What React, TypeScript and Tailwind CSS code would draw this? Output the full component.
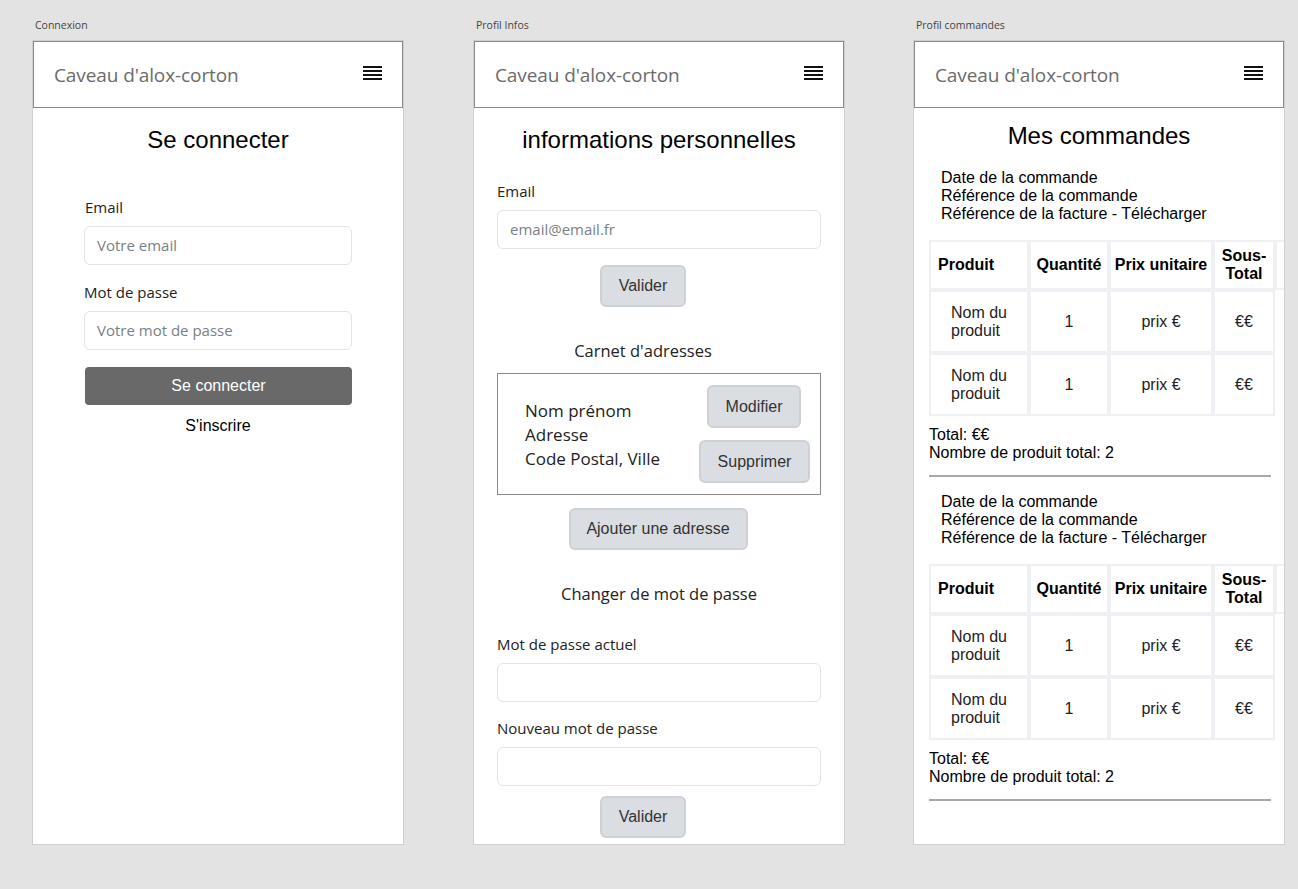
const sans = "font-['Open_Sans','Noto_Sans',sans-serif]";
const arial = "font-['Liberation_Sans',Arial,sans-serif]";

const Hamburger = () => (
  <svg width="19" height="15" viewBox="0 0 19 15" className="block">
    <rect x="0" y="0" width="19" height="2" fill="#111" />
    <rect x="0" y="4" width="19" height="2" fill="#111" />
    <rect x="0" y="8" width="19" height="2" fill="#111" />
    <rect x="0" y="12" width="19" height="2" fill="#111" />
  </svg>
);

const Header = () => (
  <div className="h-[67px] border border-[#8a8a8a] bg-white flex items-center justify-between pl-[20px] pr-[20px]">
    <span className={`${sans} text-[19px] text-[#6b6b6b] tracking-[-0.1px] mt-[2px]`}>
      Caveau d&apos;alox-corton
    </span>
    <div className="-mt-[3px]">
      <Hamburger />
    </div>
  </div>
);

type FrameProps = { label: string; children: React.ReactNode; className?: string };

const Frame = ({ label, children, className = "" }: FrameProps) => (
  <div className={`w-[372px] flex flex-col ${className}`}>
    <div className={`${sans} text-[10.5px] text-[#444] h-[40px] pl-[3px] pt-[20px] leading-none`}>
      {label}
    </div>
    <div className="h-[805px] bg-white border border-[#cfcfcf] overflow-hidden flex flex-col">
      <Header />
      {children}
    </div>
  </div>
);

const Input = ({ placeholder }: { placeholder?: string }) => (
  <div className="h-[39px] rounded-[6px] border border-[#e0e3e7] bg-white flex items-center px-[12px]">
    <span className={`${sans} text-[15px] text-[#7a8088]`}>{placeholder}</span>
  </div>
);

const GreyButton = ({ children, className = "" }: { children: React.ReactNode; className?: string }) => (
  <div
    className={`${arial} h-[42px] rounded-[6px] bg-[#dadee2] border-2 border-[#cdd1d6] text-[16px] text-[#333] flex items-center justify-center ${className}`}
  >
    {children}
  </div>
);

const Connexion = () => (
  <Frame label="Connexion">
    <h1 className={`${arial} text-[24px] text-black text-center mt-[18px] leading-[28px]`}>
      Se connecter
    </h1>
    <div className="px-[51px] flex flex-col mt-[42px]">
      <label className={`${sans} text-[15px] text-[#222] ml-[1px] leading-[22px]`}>Email</label>
      <div className="mt-[8px]">
        <Input placeholder="Votre email" />
      </div>
      <label className={`${sans} text-[15px] text-[#222] mt-[16px] leading-[22px]`}>Mot de passe</label>
      <div className="mt-[8px]">
        <Input placeholder="Votre mot de passe" />
      </div>
      <div
        className={`${arial} mt-[17px] ml-[1px] h-[38px] rounded-[4px] bg-[#696969] text-white text-[16px] flex items-center justify-center`}
      >
        Se connecter
      </div>
      <div className={`${arial} text-[16px] text-black text-center mt-[9px]`}>S&apos;inscrire</div>
    </div>
  </Frame>
);

const ProfilInfos = () => (
  <Frame label="Profil Infos">
    <h1 className={`${arial} text-[24px] text-black text-center mt-[18px] leading-[28px]`}>
      informations personnelles
    </h1>
    <div className="px-[23px] flex flex-col mt-[26px]">
      <label className={`${sans} text-[15px] text-[#222] leading-[22px]`}>Email</label>
      <div className="mt-[8px]">
        <Input placeholder="email@email.fr" />
      </div>
      <GreyButton className="w-[86px] self-center mt-[16px] mr-[32px]">Valider</GreyButton>
      <div className={`${sans} text-[16.5px] text-[#222] text-center pr-[32px] mt-[33px] leading-[22px]`}>
        Carnet d&apos;adresses
      </div>
      <div className="mt-[11px] h-[122px] border border-[#8a8a8a] flex justify-between pl-[27px] pr-[10px]">
        <div className={`${sans} text-[17px] text-[#222] leading-[24px] pt-[25px]`}>
          <div>Nom prénom</div>
          <div>Adresse</div>
          <div>Code Postal, Ville</div>
        </div>
        <div className="flex flex-col items-end pt-[11px]">
          <GreyButton className="w-[94px] h-[43px] mr-[9px]">Modifier</GreyButton>
          <GreyButton className="w-[111px] h-[43px] mt-[12px]">Supprimer</GreyButton>
        </div>
      </div>
      <GreyButton className="w-[179px] self-center mt-[13px] ml-[-2px]">Ajouter une adresse</GreyButton>
      <div className={`${sans} text-[16.5px] text-[#222] text-center mt-[33px] leading-[22px]`}>
        Changer de mot de passe
      </div>
      <label className={`${sans} text-[15px] text-[#222] mt-[28px] leading-[22px]`}>Mot de passe actuel</label>
      <div className="mt-[8px]">
        <Input />
      </div>
      <label className={`${sans} text-[15px] text-[#222] mt-[15px] leading-[22px]`}>Nouveau mot de passe</label>
      <div className="mt-[8px]">
        <Input />
      </div>
      <GreyButton className="w-[86px] self-center mt-[10px] mr-[32px]">Valider</GreyButton>
    </div>
  </Frame>
);

const cell = "border-2 border-[#eef0f3] flex items-center";

const Order = () => (
  <div className="flex flex-col">
    <div className={`${arial} text-[16px] text-black leading-[18px] pl-[27px]`}>
      <div>Date de la commande</div>
      <div>Référence de la commande</div>
      <div>Référence de la facture - Télécharger</div>
    </div>
    <div className={`${arial} text-[16px] text-black mt-[17px] ml-[15px] grid grid-cols-[100px_80px_104px_62px_20px] leading-[18px]`}>
      <div className={`${cell} h-[50px] font-bold pl-[7px]`}>Produit</div>
      <div className={`${cell} h-[50px] font-bold justify-center`}>Quantité</div>
      <div className={`${cell} h-[50px] font-bold justify-center whitespace-nowrap`}>Prix unitaire</div>
      <div className={`${cell} h-[50px] font-bold justify-center text-center`}>Sous-<br />Total</div>
      <div className={`${cell} h-[50px]`}></div>
      {[0, 1].map((i) => (
        <div key={i} className="contents">
          <div className={`${cell} h-[63px] justify-center text-left`}>
            <span className="text-[#222]">Nom du<br />produit</span>
          </div>
          <div className={`${cell} h-[63px] justify-center text-[#222]`}>1</div>
          <div className={`${cell} h-[63px] justify-center text-[#222]`}>prix €</div>
          <div className={`${cell} h-[63px] justify-center text-[#222]`}>€€</div>
          <div></div>
        </div>
      ))}
    </div>
    <div className={`${arial} text-[16px] text-black leading-[18px] pl-[15px] mt-[10px]`}>
      <div>Total: €€</div>
      <div>Nombre de produit total: 2</div>
    </div>
    <div className="ml-[15px] w-[342px] h-[2px] bg-[#a8a8a8] mt-[13px]"></div>
  </div>
);

const ProfilCommandes = () => (
  <Frame label="Profil commandes" className="-ml-[1px]">
    <h1 className={`${arial} text-[24px] text-black text-center mt-[14px] leading-[28px]`}>
      Mes commandes
    </h1>
    <div className="mt-[19px]">
      <Order />
    </div>
    <div className="mt-[16px]">
      <Order />
    </div>
  </Frame>
);

export default function App() {
  return (
    <div className="w-[1298px] h-[889px] bg-[#e3e3e3] flex gap-[69px] pl-[32px] overflow-hidden">
      <Connexion />
      <ProfilInfos />
      <ProfilCommandes />
    </div>
  );
}
